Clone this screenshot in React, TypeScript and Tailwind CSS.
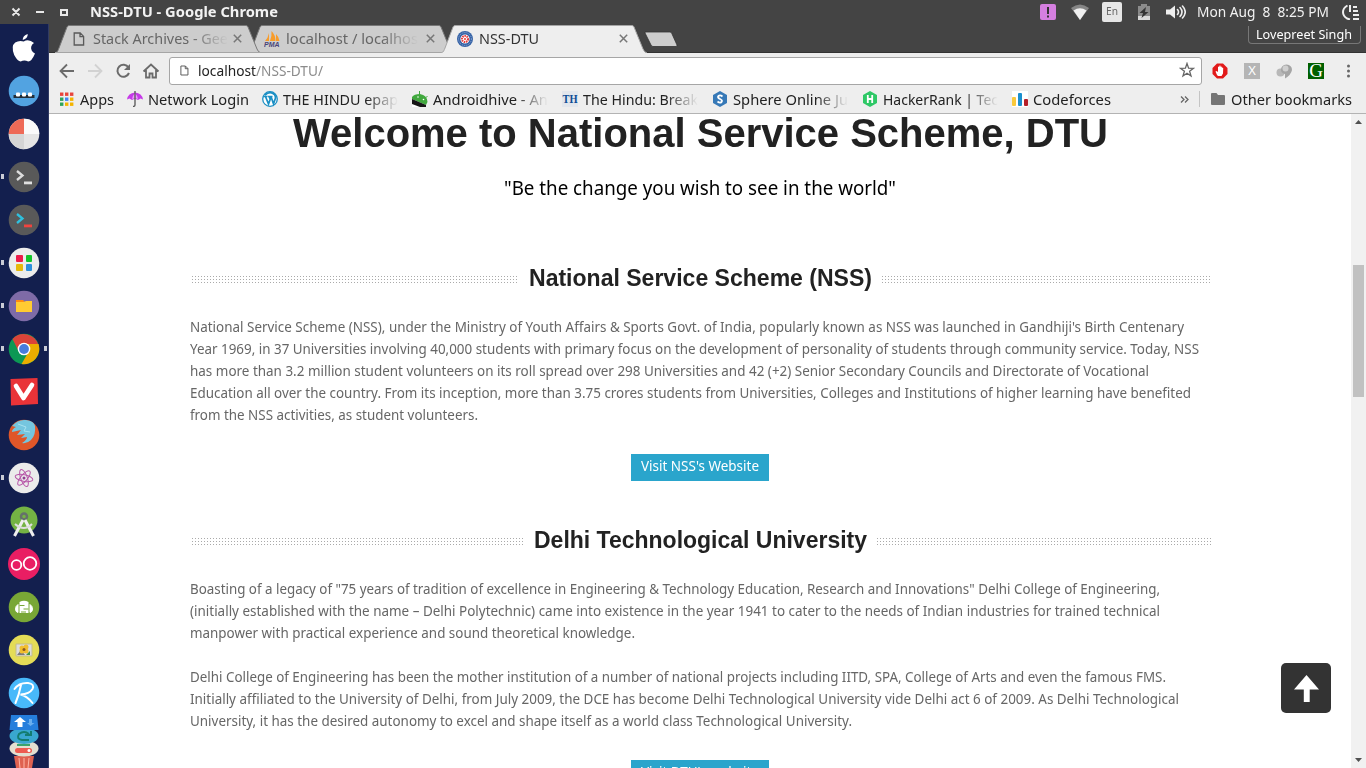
import { useLayoutEffect, useRef, useState } from "react";
import type { ReactNode } from "react";

/** A single line of text condensed or stretched horizontally to a set width. */
function Fit({ w, className = "", children }: { w: number; className?: string; children: ReactNode }) {
  const ref = useRef<HTMLSpanElement>(null);
  const [scale, setScale] = useState(1);
  useLayoutEffect(() => {
    const el = ref.current;
    if (!el) return;
    const natural = el.getBoundingClientRect().width / scale;
    if (natural > 0) setScale(w / natural);
    // eslint-disable-next-line
  }, [w]);
  return (
    <span className={"block shrink-0 whitespace-nowrap " + className} style={{ width: w }}>
      <span ref={ref} className="inline-block origin-left whitespace-pre" style={{ transform: `scaleX(${scale})` }}>
        {children}
      </span>
    </span>
  );
}

const FADE = "[mask-image:linear-gradient(to_right,#000_72%,transparent_100%)]";

function PageIcon({ className = "" }: { className?: string }) {
  return (
    <svg className={className} viewBox="0 0 12 14" fill="none" stroke="#5a5a5a" strokeWidth="1.3">
      <path d="M1.2 1h6l3.4 3.4V13H1.2zM7 1v3.6h3.6" />
    </svg>
  );
}

function CloseIcon() {
  return (
    <svg className="h-[9px] w-[9px] shrink-0" viewBox="0 0 9 9" stroke="#777" strokeWidth="1.5">
      <path d="M.8.8l7.4 7.4M8.2.8L.8 8.2" />
    </svg>
  );
}

function PmaIcon() {
  return (
    <svg className="h-4 w-4 shrink-0" viewBox="0 0 16 16">
      <path d="M1 10Q4 7 5 2v8zM6 10Q8 5 7.5 0q4 4 4 10zM12 10V3q3 3 3.5 7z" fill="#f89c2a" />
      <text x="0" y="15.6" fontSize="6.5" fontWeight="bold" fontStyle="italic" fontFamily="Liberation Sans, sans-serif" fill="#4a4478" textLength="15.5" lengthAdjust="spacingAndGlyphs">PMA</text>
    </svg>
  );
}

function NssIcon() {
  return (
    <svg className="h-4 w-4 shrink-0" viewBox="0 0 16 16" fill="none">
      <circle cx="8" cy="8" r="8" fill="#3562a6" />
      <circle cx="8" cy="8" r="6.4" stroke="#a9bfdf" strokeWidth=".8" strokeDasharray="1 1" />
      <circle cx="8" cy="8" r="4.6" fill="#fff" />
      <circle cx="8" cy="8" r="3" stroke="#e33b3b" strokeWidth="2" strokeDasharray="1.5 .7" />
      <circle cx="8" cy="8" r="1" fill="#e33b3b" />
    </svg>
  );
}

function Tab({ icon, label, w, active = false, className = "" }: { icon: ReactNode; label: string; w: number; active?: boolean; className?: string }) {
  return (
    <div className={"relative h-[28px] w-[206px] shrink-0 " + className}>
      <svg className="absolute inset-0 h-full w-full" viewBox="0 0 206 28">
        <path d="M0 28C3 27 3 25 4 23L12 2Q12.7.5 14 .5H191Q192.500 .5 193 2L202 24Q203 27 206 28Z" fill={active ? "#eeeeee" : "#cdcdcd"} />
        <path d="M0 28C3 27 3 25 4 23L12 2Q12.7.5 14 .5H191Q192.500 .5 193 2L202 24Q203 27 206 28" fill="none" stroke={active ? "#a5a5a5" : "#777"} strokeWidth="1" />
        {!active && <path d="M0 27.500H206" stroke="#a5a5a5" />}
      </svg>
      <div className="relative flex h-full items-center pb-px pl-4">
        <span className="flex w-[22px] shrink-0 items-center">{icon}</span>
        <Fit w={w} className={active ? "text-[#333]" : "text-[#666] " + FADE}>{label}</Fit>
        <span className="ml-auto mr-[19px]"><CloseIcon /></span>
      </div>
    </div>
  );
}

function TitleBar() {
  return (
    <header className="flex h-6 shrink-0 items-center bg-[#444444] pb-px text-[#f2f2f2]">
      <svg className="ml-[11px] h-3 w-[58px]" viewBox="0 0 58 12" fill="none" stroke="#e8e8e8" strokeWidth="2">
        <path d="M1.500 2.500l7 7M8.500 2.500l-7 7M25 6h8M50 4h6v5h-6z" />
      </svg>
      <Fit w={188} className="ml-[21px] text-[14px] font-bold">NSS-DTU - Google Chrome</Fit>
      <div className="ml-auto flex items-center pr-[6px]">
        <span className="flex h-4 w-4 items-center justify-center rounded-[2px] bg-[#d57fe0]">
          <svg className="h-3 w-1" viewBox="0 0 4 12" fill="#333"><path d="M1 1h2v7H1zM1 9.500h2v2H1z" /></svg>
        </span>
        <svg className="ml-[15px] h-4 w-[18px]" viewBox="0 0 18 16">
          <path d="M0 4Q9-3 18 4L9 16z" fill="#858585" />
          <path d="M2.500 6.500Q9 2 15.500 6.500L9 16z" fill="#f0f0f0" />
        </svg>
        <span className="ml-[13px] flex h-5 w-5 items-center justify-center rounded-[2px] bg-[#e6e6e6] text-[#666]">
          <Fit w={12} className="text-[11px]">En</Fit>
        </span>
        <svg className="ml-4 h-4 w-3" viewBox="0 0 12 16">
          <path d="M0 2h3V0h6v2h3v14H0z" fill="#8b8b8b" />
          <path d="M0 12h12v4H0z" fill="#d9d9d9" />
          <path d="M8 3L1.500 9H5l-1.500 5L10.500 8H7z" fill="#333" />
        </svg>
        <svg className="ml-4 h-[14px] w-[20px]" viewBox="0 0 20 14" fill="none" stroke="#eee" strokeWidth="1.6" strokeLinecap="round">
          <path d="M0 4.500h4l5-4v13l-5-4H0z" fill="#eee" stroke="none" />
          <path d="M11.500 4.500q2 2.500 0 5M14 2.500q4 4.500 0 9M16.500 1q5.500 6 0 12" />
        </svg>
        <Fit w={132} className="ml-[11px] text-[14px]">Mon Aug  8  8:25 PM</Fit>
        <svg className="ml-[13px] h-4 w-[18px]" viewBox="0 0 18 16" fill="none" stroke="#eee" strokeWidth="2">
          <path d="M5.500 1.500Q1 4 1 8t4 6.500L8 15.500M8 1v7M11 3h4M11 7h5M11 11h6M11 15h6" />
        </svg>
      </div>
    </header>
  );
}

function TabStrip() {
  return (
    <div className="flex h-[29px] shrink-0 items-start border-b border-[#333] bg-[#444444] pl-[6px] pt-px text-[14px]">
      <Tab className="z-20" icon={<PageIcon className="ml-[2px] h-[14px] w-3" />} label="Stack Archives - Gee" w={135} />
      <Tab className="z-10 -ml-[13px]" icon={<PmaIcon />} label="localhost / localhos" w={132} />
      <Tab className="z-30 -ml-[13px]" icon={<NssIcon />} label="NSS-DTU" w={60} active />
      <svg className="-ml-[3px] mt-[6px] h-[17px] w-[34px]" viewBox="0 0 34 17">
        <path d="M1 1h25q1 0 1.600 1L33 14q.5 1.500-1 1.500H9q-1.500 0-2-1.500L1 2z" fill="#cdcdcd" stroke="#333" strokeWidth=".8" />
      </svg>
      <div className="ml-auto mr-[5px] mt-px flex h-[18px] w-[113px] items-center justify-center rounded-b-[4px] border border-t-0 border-[#777] pr-px pt-px text-[12px] text-white">
        <Fit w={96}>Lovepreet Singh</Fit>
      </div>
    </div>
  );
}

function AddressBar() {
  return (
    <div className="flex h-[34px] shrink-0 items-center pl-[10px] pr-[15px] pt-px">
      <svg className="h-4 w-[102px] shrink-0" viewBox="0 0 102 16" fill="none" strokeWidth="1.800">
        <path d="M15 8H2M8 1.500L1.500 8 8 14.500" stroke="#6b6b6b" />
        <path d="M29 8h13M36 1.500L42.500 8 36 14.500" stroke="#d2d2d2" />
        <path d="M75.500 4.500A6 6 0 1 0 76 10" stroke="#6b6b6b" strokeWidth="2" transform="translate(-6 0)" />
        <path d="M71 1v6h-6z" fill="#6b6b6b" />
        <path d="M84.500 8.500L92 1.500l7.500 7M87 7v7.500h3.500v-4h3v4H97V7" stroke="#6b6b6b" />
      </svg>
      <div className="ml-[8px] flex h-[28px] flex-1 items-center rounded-[3px] border border-[#a6a6a6] bg-white pb-px pl-[10px] pr-[6px] text-[14px]">
        <PageIcon className="h-[11px] w-[9px]" />
        <Fit w={58} className="ml-[9px] text-[#222]">localhost</Fit>
        <Fit w={67} className="text-[#8b8b8b]">/NSS-DTU/</Fit>
        <svg className="ml-auto h-4 w-4" viewBox="0 0 16 16" fill="none" stroke="#666" strokeWidth="1.300">
          <path d="M8 1.500l1.600 4.700 4.900.1-3.900 3 1.400 4.700L8 11.200l-4 2.800 1.400-4.700-3.900-3 4.900-.1z" />
        </svg>
      </div>
      <svg className="ml-[10px] h-4 w-4" viewBox="0 0 16 16">
        <path d="M5 .5h6L15.500 5v6L11 15.500H5L.5 11V5z" fill="#e21a1a" />
        <path d="M5 12L3.500 8.500l1-.5L6 9V4q.7-1 1.300 0V2.800q.7-.8 1.300 0V4q.7-1 1.300 0v1q.8-.8 1.300 0L11 10.500 9.500 13H6z" fill="#fff" />
      </svg>
      <span className="ml-4 flex h-4 w-4 items-center justify-center bg-[#b5b5b5] text-[13px] text-white">X</span>
      <svg className="ml-4 h-4 w-4" viewBox="0 0 16 16">
        <circle cx="4.500" cy="9.500" r="4" fill="#b8b8b8" />
        <path d="M5 7Q5 2 10.500 1.500 16 2 16 7q-1 5-7 8.500V11Q5 10 5 7" fill="#a5a5a5" />
        <circle cx="9.500" cy="5.500" r="3" fill="#d0d0d0" />
      </svg>
      <span className="ml-4 flex h-4 w-4 items-center justify-center bg-[#006000] font-['Liberation_Serif',serif] text-[19px] leading-4 text-white">G</span>
      <svg className="ml-[22px] h-[14px] w-[5px]" viewBox="0 0 5 14" fill="#666">
        <circle cx="2.500" cy="2" r="1.500" /><circle cx="2.500" cy="7" r="1.500" /><circle cx="2.500" cy="12" r="1.500" />
      </svg>
    </div>
  );
}

function Bookmark({ icon, label, w, fade = false }: { icon: ReactNode; label: string; w: number; fade?: boolean }) {
  return (
    <div className="mr-[13px] flex shrink-0 items-center gap-[5px]">
      <svg className="h-4 w-4 shrink-0" viewBox="0 0 16 16">{icon}</svg>
      <div className={fade ? "w-[116px]" : ""}>
        <Fit w={w} className={fade ? FADE : ""}>{label}</Fit>
      </div>
    </div>
  );
}

const APP_COLORS = ["#e8453c", "#e8453c", "#e8453c", "#2fa35a", "#4285f4", "#f4b400", "#2fa35a", "#f4b400", "#f4b400"];

function BookmarksBar() {
  return (
    <div className="flex h-[27px] shrink-0 items-center border-b border-[#b3b3b3] pb-[2px] pl-[10px] pr-[14px] text-[14px] text-[#222]">
      <Bookmark w={34} label="Apps" icon={APP_COLORS.map((c, i) => <rect key={i} x={1 + (i % 3) * 5} y={1.5 + Math.floor(i / 3) * 5} width="3.4" height="3.4" fill={c} />)} />
      <Bookmark w={101} label="Network Login" icon={<>
        <path d="M0 8.500Q1 2 8 1.500 15 2 16 8.500L13.500 7.500 11 9 8 7.500 5 9 2.500 7.500z" fill="#c63be8" />
        <path d="M5 8Q6 4 8 2q2 2 3 6L8 7z" fill="#ec9cff" />
        <path d="M8 0v14q0 1.500-2 1.500" fill="none" stroke="#555" strokeWidth="1.300" />
      </>} />
      <Bookmark fade w={115} label="THE HINDU epap" icon={<>
        <circle cx="8" cy="8" r="7.300" fill="#fff" stroke="#1b8fc4" strokeWidth="1.300" />
        <path d="M2 5.500h3.500M3.500 5.500L6.500 13 8.300 8 7 5.500h3.500M9 5.500l2.500 7.300L13.500 7q0-2-1-3.500M3 4q5-4.500 9.500-.5" fill="none" stroke="#1b8fc4" strokeWidth="1.700" />
      </>} />
      <Bookmark fade w={115} label="Androidhive - An" icon={<>
        <path d="M0 6Q2 3 8 3q7 1 7.500 8L14 14 0 8z" fill="#41a83e" />
        <path d="M0 8l14 6v2H0z" fill="#151515" /><path d="M0 13l8 3H0z" fill="#fff" />
        <path d="M7.500 0v4M15.500 5l-2 2" stroke="#41a83e" /><circle cx="6" cy="6" r=".8" fill="#fff" /><circle cx="11.500" cy="8.500" r=".8" fill="#fff" />
      </>} />
      <Bookmark fade w={115} label="The Hindu: Break" icon={<>
        <path d="M0 0h16v16H0z" fill="#e2e6ec" />
        <text x="0.500" y="12" fontSize="12" fontWeight="bold" fontFamily="Liberation Serif, serif" fill="#0d4c94" textLength="15" lengthAdjust="spacingAndGlyphs">TH</text>
      </>} />
      <Bookmark fade w={115} label="Sphere Online Ju" icon={<>
        <path d="M8 0l7 4v8l-7 4-7-4V4z" fill="#3779b7" />
        <path d="M10.500 5.500Q8 3.500 6.500 5T8 8t1.500 3-4-.5" fill="none" stroke="#fff" strokeWidth="1.800" />
      </>} />
      <Bookmark fade w={115} label="HackerRank | Tec" icon={<>
        <path d="M8 0l7 4v8l-7 4-7-4V4z" fill="#2ec866" />
        <path d="M5.800 4v8M10.200 4v8M5.800 8h4.400" fill="none" stroke="#fff" strokeWidth="1.800" />
      </>} />
      <Bookmark w={78} label="Codeforces" icon={<>
        <path d="M0 0h16v16H0z" fill="#fff" />
        <rect y="6" width="4" height="9" rx="1" fill="#f9c93c" /><rect x="6" y="2" width="4" height="13" rx="1" fill="#1a8fce" /><rect x="12" y="8" width="4" height="7" rx="1" fill="#b5202a" />
      </>} />
      <svg className="ml-auto h-[7px] w-[9px]" viewBox="0 0 9 7" fill="none" stroke="#666" strokeWidth="1.300"><path d="M1 .5l3 3-3 3M5 .5l3 3-3 3" /></svg>
      <span className="ml-[10px] h-4 w-px bg-[#c4c4c4]" />
      <svg className="ml-[11px] h-3 w-[14px]" viewBox="0 0 14 12" fill="#757575"><path d="M1 0h4.500L7 2h6q1 0 1 1v8q0 1-1 1H1q-1 0-1-1V1q0-1 1-1z" /></svg>
      <Fit w={121} className="ml-[6px]">Other bookmarks</Fit>
    </div>
  );
}

const DOCK: { art: ReactNode; running?: boolean; focused?: boolean }[] = [
  { art: <path d="M20.500 3.500q.3 4.500-5 6Q15.500 5 20.500 3.500M16.500 11q5-3 10.300 1.500-4.300 3-2.300 7.500 1 2 3.300 3Q24.500 31 21 31q-4-1.800-7.500 0-3 0-6.500-6.500-3.500-9 1-12.500 4-2.500 8.500-1" fill="#fff" transform="translate(-.8 -1.500)" /> },
  { art: <><circle cx="16" cy="16" r="15.300" fill="#52a3e1" /><path d="M5.500 20h21v3h-21z" fill="#222d38" /><rect x="8" y="17.500" width="4" height="4" rx="1" fill="#fff" /><rect x="14" y="17.500" width="4" height="4" rx="1" fill="#fff" /><rect x="20" y="17.500" width="4" height="4" rx="1" fill="#fff" /></> },
  { art: <><circle cx="16" cy="16" r="15.300" fill="#e5e5e5" /><path d="M16 16V.7A15.300 15.300 0 0 0 .7 16z" fill="#ee6a57" /><path d="M16 16V.7A15.300 15.300 0 0 1 31.300 16z" fill="#fafafa" /><path d="M16 16H.7A15.300 15.300 0 0 0 16 31.300z" fill="#d5d5d5" /></> },
  { running: true, art: <><circle cx="16" cy="16" r="15.300" fill="#595959" /><path d="M9 10l5.500 4.500L9 19" stroke="#ddd" strokeWidth="2.300" fill="none" /><path d="M16 20.500h8v2.800h-8z" fill="#e0e0e0" /></> },
  { art: <><circle cx="16" cy="16" r="15.300" fill="#595959" /><path d="M9 10l5.500 4.500L9 19" stroke="#2fc0de" strokeWidth="2.300" fill="none" /><path d="M16 20.500h8v2.800h-8z" fill="#f0443f" /></> },
  { running: true, art: <><circle cx="16" cy="16" r="15.300" fill="#ececec" /><rect x="8" y="8" width="7" height="7" rx="1" fill="#ec1c4b" /><rect x="18" y="8" width="6" height="7" rx="1" fill="#12c52a" /><rect x="8" y="17" width="7" height="7" rx="1" fill="#e6b90a" /><rect x="18" y="17" width="6" height="7" rx="1" fill="#2c90dc" /></> },
  { running: true, art: <><circle cx="16" cy="16" r="15.300" fill="#7e6ba7" /><path d="M8 10h7l2 2h-9z" fill="#ff8b12" /><path d="M8 12h8l2-1h6v11H8z" fill="#ffcb32" /></> },
  { running: true, focused: true, art: <><circle cx="16" cy="16" r="15.300" fill="#0c9854" /><path d="M4.500 6A15.300 15.300 0 0 1 30.500 12H16L10.500 18z" fill="#da4339" /><path d="M16 11h14.500A15.300 15.300 0 0 1 13.500 31L21 18z" fill="#eaad00" /><circle cx="16" cy="16" r="6.300" fill="#fff" /><circle cx="16" cy="16" r="4.900" fill="#477ddd" /></> },
  { art: <><path d="M2.500 3l27-1 .5 26-27 1.500z" fill="#e93338" /><path d="M8 10l7.500 12L24 9" stroke="#fff" strokeWidth="4.600" strokeLinecap="round" strokeLinejoin="round" fill="none" /></> },
  { art: <><circle cx="16" cy="16" r="15.300" fill="#df5629" /><path d="M4 7Q10 0 18 1t9 6q1 9-4 14-4 4-9 3 5-3 5-6l-6 1 4-4-8 1 4-5-9 2q0-3 4-5z" fill="#75c6df" /><path d="M10 5l8 3-2 4 6 1" stroke="#a8e2ef" fill="none" /></> },
  { running: true, art: <><circle cx="16" cy="16" r="15.300" fill="#ebebeb" /><g fill="none" stroke="#b756a8" strokeWidth="1"><ellipse cx="16" cy="16" rx="9" ry="3.300" transform="rotate(12 16 16)" /><ellipse cx="16" cy="16" rx="9" ry="3.300" transform="rotate(70 16 16)" /><ellipse cx="16" cy="16" rx="9" ry="3.300" transform="rotate(130 16 16)" /></g><circle cx="16" cy="16" r="1.500" fill="#8f3d91" /></> },
  { art: <><circle cx="16" cy="15" r="13.500" fill="#74b344" /><circle cx="16" cy="11.500" r="3" stroke="#65716a" strokeWidth="2.500" fill="none" /><path d="M15 15L6.500 31M17 15l8.500 16" stroke="#eee" strokeWidth="3" /><path d="M7 19q9 8 17 0" stroke="#ddd" strokeWidth="2" fill="none" /></> },
  { art: <><circle cx="16" cy="16" r="16" fill="#e91e63" /><g fill="none" stroke="#fff" strokeWidth="1.800"><circle cx="8.500" cy="17" r="4.800" /><circle cx="22" cy="15.500" r="6.300" /></g></> },
  { art: <><circle cx="16" cy="16" r="15.300" fill="#79a736" /><path d="M11.500 11q4.500-2.500 9 0v11h-9z" fill="#fff" /><path d="M10 13.500v8q-2.500-.5-2.500-3.500T10 13.500M22 13.500v8q2.500-.5 2.500-3.500T22 13.500" fill="#fff" stroke="#fff" /><path d="M11.500 14.500h5M15.500 18h5M13 21h5" stroke="#79a736" strokeWidth="1.200" /></> },
  { art: <><circle cx="16" cy="16" r="15.300" fill="#e4dc57" /><path d="M8 10h16v12H8z" fill="#ddd" stroke="#c5bd8b" /><path d="M9 21l4-5 4 5z" fill="#7c7c7c" /><g fill="#f1bd2e"><circle cx="14" cy="14" r="2.500" /><circle cx="18" cy="13" r="2.500" /><circle cx="18" cy="17" r="2.500" /><circle cx="14" cy="17" r="2.500" /></g><circle cx="16" cy="15.500" r="1.500" fill="#8a5723" /><path d="M18 21l4-4v4z" fill="#449545" /></> },
  { art: <><circle cx="16" cy="16" r="15.300" fill="#48b9fa" /><path d="M13 8Q11 18 7.500 26M6.500 12Q11 5.500 20 6q7 1 4.500 6-3 5-12 5.500Q19 19 24.500 26" stroke="#fff" strokeWidth="2" fill="none" strokeLinecap="round" /></> },
];

function Dock() {
  return (
    <nav className="flex w-[49px] shrink-0 flex-col overflow-hidden border-r border-[#303a63] bg-[#131f4e] pt-[2px]">
      {DOCK.map((item, i) => (
        <div key={i} className="flex h-[43px] shrink-0 items-center">
          <span className={item.running ? "ml-px h-[5px] w-[3px] bg-[#c9cbd5]" : "ml-px h-[5px] w-[3px]"} />
          <svg className="ml-1 h-8 w-8" viewBox="0 0 32 32">{item.art}</svg>
          {item.focused && <span className="ml-[4px] h-[5px] w-[3px] bg-[#c9cbd5]" />}
        </div>
      ))}
      <svg className="ml-[9px] h-[54px] w-[30px] shrink-0" viewBox="0 0 30 54">
        <path d="M5 42h20l-2 12H7L5 42z" fill="#df6251" />
        <path d="M10 44l1 10M15 44v10M20 44l-1 10" stroke="#ffb7a8" />
        <ellipse cx="15" cy="34.500" rx="14.500" ry="8" fill="#e3dfd0" />
        <path d="M8 31h13" stroke="#3ba36b" strokeWidth="2" fill="none" />
        <rect x="6" y="34" width="17" height="5" rx="2.500" fill="#ed5c51" /><circle cx="20" cy="36.500" r="1.500" fill="#fff" />
        <ellipse cx="15" cy="22" rx="14.500" ry="8" fill="#39a7cf" />
        <path d="M20 20q-5-4-10 0-3 5 3 6h7M22 17v4h-6" fill="none" stroke="#137d70" strokeWidth="2" />
        <path d="M2 1h26l1.500 15H.5z" fill="#257edc" />
        <path d="M11 3l6 5h-3.500v5h-5V8H5z" fill="#fff" /><path d="M20 5h3v4h2.500L21.500 12 18 9h2z" fill="#69aeee" />
      </svg>
    </nav>
  );
}

const DOTS = "mt-[5px] h-[9px] bg-[conic-gradient(from_0deg_at_1px_1px,transparent_75%,#aaaaaa_0)] bg-[length:3px_3px]";

function SectionTitle({ w, lead, children }: { w: number; lead: string; children: string }) {
  return (
    <div className="-mr-px ml-[2px] flex h-[30px] items-center gap-[10px] font-['Liberation_Sans',Arial,sans-serif] text-[24px] font-bold leading-[30px] text-[#222]">
      <span className={DOTS + " " + lead} />
      <Fit w={w}>{children}</Fit>
      <span className={DOTS + " flex-1"} />
    </div>
  );
}

function Paragraph({ lines }: { lines: [string, number][] }) {
  return (
    <p className="text-[14px] leading-[22px] text-[#666]">
      {lines.map(([text, w]) => <Fit key={text} w={w}>{text}</Fit>)}
    </p>
  );
}

function LinkButton({ children }: { children: string }) {
  return (
    <a className="mx-auto flex h-[27px] w-[138px] justify-center bg-[#2aa5cc] text-[14px] leading-[24px] text-white">
      <Fit w={118}>{children}</Fit>
    </a>
  );
}

function WebPage() {
  return (
    <main className="min-w-0 flex-1 overflow-hidden bg-white">
      <div className="mx-auto w-[1020px]">
        <h1 className="flex h-[38px] justify-center font-['Liberation_Sans',Arial,sans-serif] text-[41px] font-bold leading-[38px] text-[#222]">
          <Fit w={815}>Welcome to National Service Scheme, DTU</Fit>
        </h1>
        <div className="mt-[21px] flex h-[30px] justify-center text-[20px] leading-[30px] text-black">
          <Fit w={392}>"Be the change you wish to see in the world"</Fit>
        </div>
        <section className="mt-[60px]">
          <SectionTitle w={343} lead="w-[327px]">National Service Scheme (NSS)</SectionTitle>
          <div className="mb-7 mt-[23px]">
            <Paragraph lines={[
              ["National Service Scheme (NSS), under the Ministry of Youth Affairs & Sports Govt. of India, popularly known as NSS was launched in Gandhiji's Birth Centenary", 994],
              ["Year 1969, in 37 Universities involving 40,000 students with primary focus on the development of personality of students through community service. Today, NSS", 1009],
              ["has more than 3.2 million student volunteers on its roll spread over 298 Universities and 42 (+2) Senior Secondary Councils and Directorate of Vocational", 959],
              ["Education all over the country. From its inception, more than 3.75 crores students from Universities, Colleges and Institutions of higher learning have benefited", 1001],
              ["from the NSS activities, as student volunteers.", 288],
            ]} />
          </div>
          <LinkButton>Visit NSS's Website</LinkButton>
        </section>
        <section className="mt-[44px]">
          <SectionTitle w={333} lead="w-[332px]">Delhi Technological University</SectionTitle>
          <div className="mb-7 mt-[23px] flex flex-col gap-[22px]">
            <Paragraph lines={[
              ['Boasting of a legacy of "75 years of tradition of excellence in Engineering & Technology Education, Research and Innovations" Delhi College of Engineering,', 970],
              ["(initially established with the name – Delhi Polytechnic) came into existence in the year 1941 to cater to the needs of Indian industries for trained technical", 970],
              ["manpower with practical experience and sound theoretical knowledge.", 445],
            ]} />
            <Paragraph lines={[
              ["Delhi College of Engineering has been the mother institution of a number of national projects including IITD, SPA, College of Arts and even the famous FMS.", 976],
              ["Initially affiliated to the University of Delhi, from July 2009, the DCE has become Delhi Technological University vide Delhi act 6 of 2009. As Delhi Technological", 989],
              ["University, it has the desired autonomy to excel and shape itself as a world class Technological University.", 662],
            ]} />
          </div>
          <LinkButton>Visit DTU's website</LinkButton>
        </section>
      </div>
    </main>
  );
}

function Scrollbar() {
  return (
    <div className="flex w-[15px] shrink-0 flex-col items-center bg-[#f1f1f1]">
      <svg className="mt-[6px] h-1 w-[7px]" viewBox="0 0 7 4" fill="#505050"><path d="M0 4h7L3.500 0z" /></svg>
      <div className="mt-[141px] h-[132px] w-[11px] bg-[#c1c1c1]" />
      <svg className="mb-[6px] mt-auto h-1 w-[7px]" viewBox="0 0 7 4" fill="#505050"><path d="M0 0h7L3.500 4z" /></svg>
    </div>
  );
}

export default function App() {
  return (
    <div className="relative flex h-[768px] w-[1366px] flex-col overflow-hidden bg-white font-['Noto_Sans','Open_Sans',sans-serif]">
      <TitleBar />
      <div className="flex min-h-0 flex-1">
        <Dock />
        <div className="flex min-w-0 flex-1 flex-col bg-[#eeeeee]">
          <TabStrip />
          <AddressBar />
          <BookmarksBar />
          <div className="flex min-h-0 flex-1">
            <WebPage />
            <Scrollbar />
          </div>
        </div>
      </div>
      <button className="absolute bottom-[55px] right-[35px] flex h-[50px] w-[50px] items-center justify-center rounded-[5px] bg-[#333]">
        <svg className="h-[27px] w-[25px]" viewBox="0 0 25 27" fill="#fff"><path d="M12.500 0L25 14.500h-9.300V27H9.800V14.500H0z" /></svg>
      </button>
    </div>
  );
}
